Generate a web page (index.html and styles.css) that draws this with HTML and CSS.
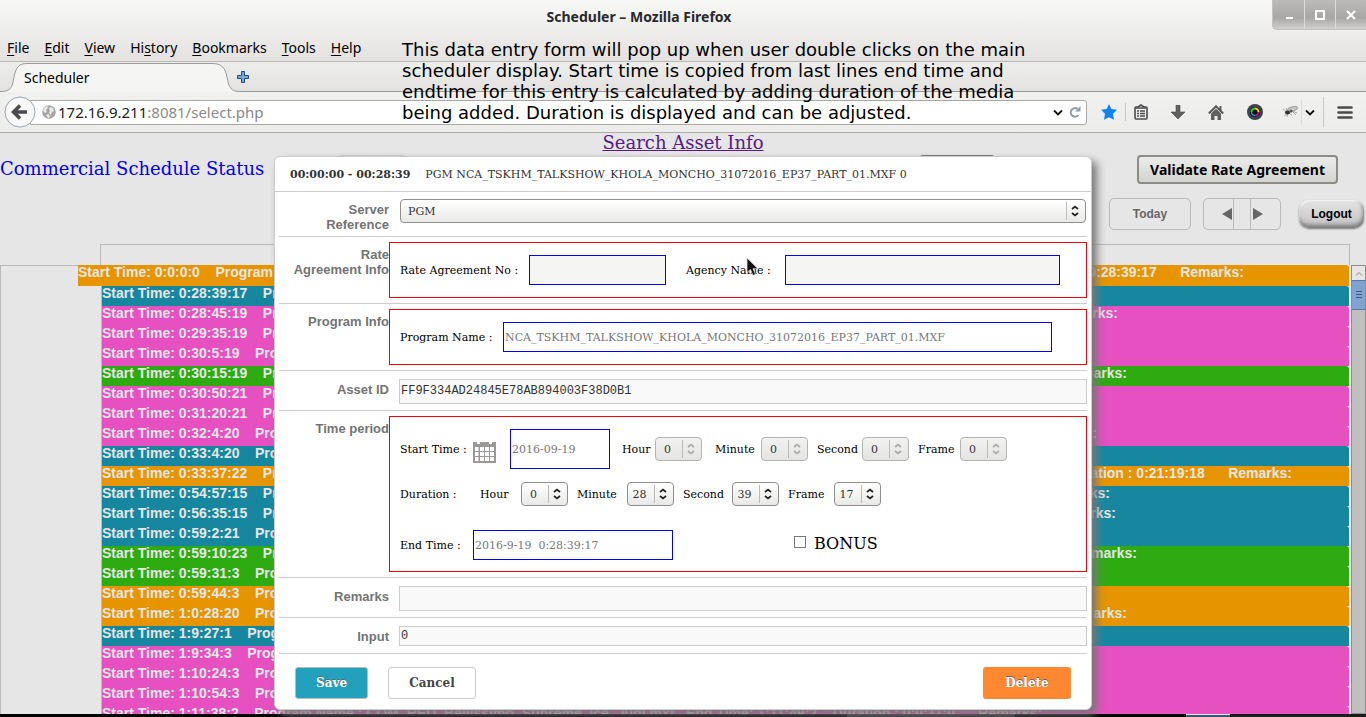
FILE: index.html
```html
<!DOCTYPE html>
<html lang="en">
<head>
<meta charset="utf-8">
<title>Scheduler</title>
<link rel="stylesheet" href="styles.css">
</head>
<body>
<header class="chrome">
  <div class="titlebar">
    <h1 class="window-title">Scheduler – Mozilla Firefox</h1>
    <div class="window-controls">
      <button type="button" aria-label="Minimize"><svg width="12" height="12" viewBox="0 0 12 12"><path d="M3 9h7" stroke="#fff" stroke-width="2"/></svg></button>
      <button type="button" aria-label="Maximize"><svg width="12" height="12" viewBox="0 0 12 12"><rect x="2" y="2" width="8" height="8" fill="none" stroke="#fff" stroke-width="2"/></svg></button>
      <button type="button" aria-label="Close"><svg width="12" height="12" viewBox="0 0 12 12"><path d="M2 2l8 8M10 2l-8 8" stroke="#fff" stroke-width="2"/></svg></button>
    </div>
  </div>
  <nav class="menubar">
    <span><u>F</u>ile</span><span><u>E</u>dit</span><span><u>V</u>iew</span><span>Hi<u>s</u>tory</span><span><u>B</u>ookmarks</span><span><u>T</u>ools</span><span><u>H</u>elp</span>
  </nav>
  <div class="tabbar">
    <div class="tab">
      <svg class="tab-shape" width="240" height="30" viewBox="0 0 240 30"><path d="M0 29.500C11 29.500 12 26 14 15C16 5 19 1.500 27 1.500H212C221 1.500 225 5 227 15C229 26 231 29.500 240 29.500V30H0Z" fill="#f5f5f4"/><path d="M0 29.500C11 29.500 12 26 14 15C16 5 19 1.500 27 1.500H212C221 1.500 225 5 227 15C229 26 231 29.500 240 29.500" fill="none" stroke="#9a9a99"/></svg>
      <span class="tab-title">Scheduler</span>
    </div>
    <button type="button" class="new-tab" aria-label="New tab"><svg width="12" height="12" viewBox="0 0 12 12"><path d="M4.500 .5h3v4h4v3h-4v4h-3v-4h-4v-3h4z" fill="#7ba7d8" stroke="#204a87"/></svg></button>
  </div>
  <div class="navbar">
    <button type="button" class="back" aria-label="Back"><svg width="32" height="32" viewBox="0 0 32 32"><circle cx="16" cy="16" r="15" fill="#f7f7f7" stroke="#9aa5b1"/><path d="M9 16h14M16 9.500L9.500 16l6.500 6.500" fill="none" stroke="#4a4a4a" stroke-width="3.500"/></svg></button>
    <div class="urlbar">
      <svg width="14" height="14" viewBox="0 0 14 14"><circle cx="7" cy="7" r="6.800" fill="#a5a5a5"/><path d="M2 3l3-2 1 2-2 2 1 2-2 1-2-2zM8 2l3 1 1 3-2 1-1 3-2-2 1-2-1-2zM4 10l3-1 1 3-2 1z" fill="#e9e9e9"/></svg>
      <span class="url"><b>172.16.9.211</b>:8081/select.php</span>
      <svg width="10" height="7" viewBox="0 0 10 7"><path d="M1 1.500l4 4 4-4" fill="none" stroke="#111" stroke-width="1.800"/></svg>
      <svg width="12" height="12" viewBox="0 0 12 12"><path d="M9.500 9A4.300 4.300 0 1 1 8.500 2.800" fill="none" stroke="#8e9ba6" stroke-width="2"/><path d="M11.500 0v5.500H6.200z" fill="#8e9ba6"/></svg>
    </div>
    <div class="tools">
      <svg width="16" height="16" viewBox="0 0 16 16"><path d="M8 0l2.400 5 5.600.8-4 4 1 6L8 13.200 3 15.800l1-6-4-4L5.600 5z" fill="#1083f0"/></svg>
      <i class="rule"></i>
      <svg width="14" height="16" viewBox="0 0 14 16"><path d="M1 4q0-1 1-1h2l3-2 3 2h2q1 0 1 1v10q0 1-1 1H2q-1 0-1-1z" fill="#f0f0f0" stroke="#4b4b4b" stroke-width="1.600"/><path d="M2 4h10M3 7h2M6 7h5M3 9.500h2M6 9.500h5M3 12h2M6 12h5" stroke="#4b4b4b" stroke-width="1.500"/></svg>
      <svg class="apart" width="14" height="14" viewBox="0 0 14 14"><path d="M5 0h4v7h5l-7 7-7-7h5z" fill="#606060" stroke="#4b4b4b" stroke-width=".6"/></svg>
      <svg class="apart" width="16" height="15" viewBox="0 0 16 15"><path d="M.8 8.500L8 1.300l7.200 7.200M12.500 1v5" fill="none" stroke="#555" stroke-width="1.900"/><path d="M3 8.500L8 3.700l5 4.800V15H9.500v-4h-3v4H3z" fill="#606060"/></svg>
      <svg class="apart" width="16" height="16" viewBox="0 0 16 16"><circle cx="8" cy="8" r="8" fill="#3d424c"/><circle cx="8" cy="8" r="5" fill="#08080c"/><path d="M4.500 8A3.500 3.500 0 0 1 8 4.500" stroke="#2fd22f" stroke-width="2" fill="none"/><path d="M8 4.500A3.500 3.500 0 0 1 11.500 8" stroke="#f0d020" stroke-width="2" fill="none"/><path d="M11.500 8A3.500 3.500 0 0 1 8 11.500" stroke="#c01090" stroke-width="2" fill="none"/><path d="M4.500 8A3.500 3.500 0 0 0 8 11.500" stroke="#0ea5c9" stroke-width="1.500" fill="none"/></svg>
      <span class="bug">
        <svg width="16" height="14" viewBox="0 0 16 14"><ellipse cx="10.500" cy="4" rx="5" ry="2" transform="rotate(-18 10.500 4)" fill="#ccc" stroke="#999"/><path d="M1 4l4 3 5 3M2 11l3-2 5-3 5 2M4 3l2 5-1 4M10 6l4 4" fill="none" stroke="#aaa"/><ellipse cx="5.500" cy="7.500" rx="2.500" ry="2" fill="#333"/><circle cx="9" cy="6" r="1.500" fill="#555"/></svg>
        <i class="rule light"></i>
        <svg width="10" height="7" viewBox="0 0 10 7"><path d="M1 1.500l4 4 4-4" fill="none" stroke="#111" stroke-width="1.800"/></svg>
      </span>
      <i class="rule tall"></i>
      <svg class="menu" width="16" height="13" viewBox="0 0 16 13"><path d="M1.500 1.500h13M1.500 6.500h13M1.500 11.500h13" stroke="#4b4b4b" stroke-width="2.600" stroke-linecap="round"/></svg>
    </div>
  </div>
</header>

<p class="annotation">This data entry form will pop up when user double clicks on the main<br>scheduler display. Start time is copied from last lines end time and<br>endtime for this entry is calculated by adding duration of the media<br>being added. Duration is displayed and can be adjusted.</p>

<main class="page">
  <div class="search"><a href="#search">Search Asset Info</a></div>
  <div class="status-line">
    <span class="status">Commercial Schedule Status</span>
    <div class="covered"><i></i><i></i></div>
    <button type="button" class="gtk">Validate Rate Agreement</button>
  </div>
  <div class="date-line">
    <button type="button" class="today">Today</button>
    <div class="pager">
      <button type="button" aria-label="Previous"><svg width="10" height="12" viewBox="0 0 10 12"><path d="M10 0v12L0 6z" fill="#666"/></svg></button>
      <i></i>
      <button type="button" aria-label="Next"><svg width="10" height="12" viewBox="0 0 10 12"><path d="M0 0v12l10-6z" fill="#666"/></svg></button>
    </div>
    <button type="button" class="logout">Logout</button>
  </div>
  <div class="scale"></div>
  <div class="board">
    <div class="gutter"></div>
    <div class="events">
      <div class="event orange first"><span>Start Time: 0:0:0:0 &nbsp;&nbsp; Program Name :</span><span class="tail">Duration : 0:28:39:17 &nbsp; &nbsp; &nbsp;Remarks:</span></div>
      <div class="event teal"><span>Start Time: 0:28:39:17 &nbsp;&nbsp; Program Name :</span></div>
      <div class="event pink"><span>Start Time: 0:28:45:19 &nbsp;&nbsp; Program Name :</span><span class="tail">Remarks:</span></div>
      <div class="event pink"><span>Start Time: 0:29:35:19 &nbsp;&nbsp; Program Name :</span></div>
      <div class="event pink"><span>Start Time: 0:30:5:19 &nbsp;&nbsp; Program Name :</span></div>
      <div class="event green"><span>Start Time: 0:30:15:19 &nbsp;&nbsp; Program Name :</span><span class="tail">Remarks:</span></div>
      <div class="event pink"><span>Start Time: 0:30:50:21 &nbsp;&nbsp; Program Name :</span></div>
      <div class="event pink"><span>Start Time: 0:31:20:21 &nbsp;&nbsp; Program Name :</span></div>
      <div class="event pink"><span>Start Time: 0:32:4:20 &nbsp;&nbsp; Program Name :</span><span class="tail">Remarks:</span></div>
      <div class="event teal"><span>Start Time: 0:33:4:20 &nbsp;&nbsp; Program Name :</span></div>
      <div class="event orange"><span>Start Time: 0:33:37:22 &nbsp;&nbsp; Program Name :</span><span class="tail">Duration : 0:21:19:18 &nbsp; &nbsp; &nbsp;Remarks:</span></div>
      <div class="event teal"><span>Start Time: 0:54:57:15 &nbsp;&nbsp; Program Name :</span><span class="tail">Remarks:</span></div>
      <div class="event teal"><span>Start Time: 0:56:35:15 &nbsp;&nbsp; Program Name :</span><span class="tail">Remarks:</span></div>
      <div class="event teal"><span>Start Time: 0:59:2:21 &nbsp;&nbsp; Program Name :</span></div>
      <div class="event green"><span>Start Time: 0:59:10:23 &nbsp;&nbsp; Program Name :</span><span class="tail">Remarks:</span></div>
      <div class="event green"><span>Start Time: 0:59:31:3 &nbsp;&nbsp; Program Name :</span></div>
      <div class="event orange"><span>Start Time: 0:59:44:3 &nbsp;&nbsp; Program Name :</span></div>
      <div class="event orange"><span>Start Time: 1:0:28:20 &nbsp;&nbsp; Program Name :</span><span class="tail">Remarks:</span></div>
      <div class="event teal"><span>Start Time: 1:9:27:1 &nbsp;&nbsp; Program Name :</span></div>
      <div class="event pink"><span>Start Time: 1:9:34:3 &nbsp;&nbsp; Program Name :</span></div>
      <div class="event pink"><span>Start Time: 1:10:24:3 &nbsp;&nbsp; Program Name :</span></div>
      <div class="event pink"><span>Start Time: 1:10:54:3 &nbsp;&nbsp; Program Name :</span></div>
      <div class="event pink"><span>Start Time: 1:11:38:2 &nbsp;&nbsp; Program Name : COM_RED_Bellissimo_Supreme_Ice_Judi.mxf &nbsp; End Time: 1:11:49:2 &nbsp;&nbsp; Duration : 0:0:11:0 &nbsp; &nbsp; &nbsp;Remarks:</span></div>
    </div>
    <div class="scrollbar">
      <div class="scroll-up"><svg width="8" height="5" viewBox="0 0 8 5"><path d="M1 4.500l3-3 3 3" fill="none" stroke="#888"/></svg></div>
      <div class="thumb"><svg width="6" height="8" viewBox="0 0 6 8"><path d="M0 .5h6M0 3.500h6M0 6.500h6" stroke="#3a5a88"/></svg></div>
    </div>
  </div>
</main>
<footer class="taskbar"><i class="a"></i><i class="b"></i><i class="c"></i></footer>

<div class="backdrop">
<form class="dialog">
  <div class="dialog-head"><b>00:00:00 - 00:28:39</b><span>PGM NCA_TSKHM_TALKSHOW_KHOLA_MONCHO_31072016_EP37_PART_01.MXF 0</span></div>
  <div class="row server">
    <label class="name" for="server">Server<br>Reference</label>
    <div class="cell"><span class="pick wide"><select id="server"><option>PGM</option></select><svg width="10" height="12" viewBox="0 0 10 12"><path d="M2 4L5 1.500l3 2.500M2 8L5 10.500l3-2.500" fill="none" stroke="currentColor" stroke-width="1.700"/></svg></span></div>
  </div>
  <div class="row">
    <span class="name">Rate<br>Agreement Info</span>
    <div class="box one">
      <label class="w-rate" for="rate">Rate Agreement No :</label><input class="blue in-rate" id="rate" type="text" disabled>
      <label class="w-agency" for="agency">Agency Name :</label><input class="blue in-agency" id="agency" type="text" disabled>
    </div>
  </div>
  <div class="row">
    <span class="name">Program Info</span>
    <div class="box one">
      <label class="w-prog" for="prog">Program Name :</label><input class="blue in-prog" id="prog" type="text" value="NCA_TSKHM_TALKSHOW_KHOLA_MONCHO_31072016_EP37_PART_01.MXF">
    </div>
  </div>
  <div class="row plain">
    <label class="name" for="asset">Asset ID</label>
    <div class="cell"><input class="grey" id="asset" type="text" value="FF9F334AD24845E78AB894003F38D0B1"></div>
  </div>
  <div class="row">
    <span class="name">Time period</span>
    <div class="box time">
      <div class="line start">
        <label class="w-start" for="date">Start Time :</label>
        <svg class="cal" width="23" height="21" viewBox="0 0 23 21"><path d="M0 0h4v2h3V0h9v2h3V0h4v21H0z" fill="#9b9998"/><path d="M2 5h3.500v4H2zM7 5h4v4H7zM12 5h4v4h-4zM17 5h4v4h-4zM2 10h3.500v4H2zM7 10h4v4H7zM12 10h4v4h-4zM17 10h4v4h-4zM2 15h3.500v4H2zM7 15h4v4H7zM12 15h4v4h-4zM17 15h4v4h-4z" fill="#fff"/></svg>
        <input class="blue in-date" id="date" type="text" value="2016-09-19">
        <label class="w-hour" for="sh">Hour</label><span class="pick off"><select id="sh" disabled><option>0</option></select><svg width="10" height="12" viewBox="0 0 10 12"><path d="M2 4L5 1.500l3 2.500M2 8L5 10.500l3-2.500" fill="none" stroke="currentColor" stroke-width="1.700"/></svg></span>
        <label class="w-min" for="sm">Minute</label><span class="pick off"><select id="sm" disabled><option>0</option></select><svg width="10" height="12" viewBox="0 0 10 12"><path d="M2 4L5 1.500l3 2.500M2 8L5 10.500l3-2.500" fill="none" stroke="currentColor" stroke-width="1.700"/></svg></span>
        <label class="w-sec" for="ss">Second</label><span class="pick off"><select id="ss" disabled><option>0</option></select><svg width="10" height="12" viewBox="0 0 10 12"><path d="M2 4L5 1.500l3 2.500M2 8L5 10.500l3-2.500" fill="none" stroke="currentColor" stroke-width="1.700"/></svg></span>
        <label class="w-frame" for="sf">Frame</label><span class="pick off"><select id="sf" disabled><option>0</option></select><svg width="10" height="12" viewBox="0 0 10 12"><path d="M2 4L5 1.500l3 2.500M2 8L5 10.500l3-2.500" fill="none" stroke="currentColor" stroke-width="1.700"/></svg></span>
      </div>
      <div class="line duration">
        <span class="w-dur">Duration :</span>
        <label class="w-hour" for="dh">Hour</label><span class="pick"><select id="dh"><option>0</option></select><svg width="10" height="12" viewBox="0 0 10 12"><path d="M2 4L5 1.500l3 2.500M2 8L5 10.500l3-2.500" fill="none" stroke="currentColor" stroke-width="1.700"/></svg></span>
        <label class="w-min" for="dm">Minute</label><span class="pick"><select id="dm"><option>28</option></select><svg width="10" height="12" viewBox="0 0 10 12"><path d="M2 4L5 1.500l3 2.500M2 8L5 10.500l3-2.500" fill="none" stroke="currentColor" stroke-width="1.700"/></svg></span>
        <label class="w-sec" for="ds">Second</label><span class="pick"><select id="ds"><option>39</option></select><svg width="10" height="12" viewBox="0 0 10 12"><path d="M2 4L5 1.500l3 2.500M2 8L5 10.500l3-2.500" fill="none" stroke="currentColor" stroke-width="1.700"/></svg></span>
        <label class="w-frame" for="df">Frame</label><span class="pick"><select id="df"><option>17</option></select><svg width="10" height="12" viewBox="0 0 10 12"><path d="M2 4L5 1.500l3 2.500M2 8L5 10.500l3-2.500" fill="none" stroke="currentColor" stroke-width="1.700"/></svg></span>
      </div>
      <div class="line end">
        <label class="w-start" for="endt">End Time :</label><input class="blue in-end" id="endt" type="text" value="2016-9-19  0:28:39:17">
        <input class="tick" type="checkbox" id="bonus"><label class="bonus" for="bonus">BONUS</label>
      </div>
    </div>
  </div>
  <div class="row plain">
    <label class="name" for="remarks">Remarks</label>
    <div class="cell"><input class="grey" id="remarks" type="text"></div>
  </div>
  <div class="row plain short">
    <label class="name" for="input">Input</label>
    <div class="cell"><input class="grey" id="input" type="text" value="0"></div>
  </div>
  <div class="actions">
    <button type="button" class="save">Save</button><button type="button" class="cancel">Cancel</button><button type="button" class="delete">Delete</button>
  </div>
</form>
</div>
<svg class="pointer" width="14" height="20" viewBox="0 0 14 20"><path d="M1 1v14.500l3.500-3 2.500 6 2.600-1.200L7 11.700h5z" fill="#111" stroke="#ddd" stroke-width=".8"/></svg>
</body>
</html>
```
FILE: styles.css
```css
* { box-sizing: border-box; }
body {
  margin: 0;
  height: 100vh;
  overflow: hidden;
  position: relative;
  display: flex;
  flex-direction: column;
  background: #e6e6e6;
  color: #000;
  font-family: "DejaVu Serif", serif;
  font-size: 11px;
}
button { font: inherit; padding: 0; margin: 0; border: 0; background: none; color: inherit; }
input, select { margin: 0; }
svg { display: block; flex: none; }

/* browser chrome */
.chrome { flex: none; font-family: "Noto Sans", "Open Sans", sans-serif; font-size: 14px; background: linear-gradient(#f8f8f7, #e3e2e1 61px, #ededec 62px, #e3e2e1 91px, #f1f1f0 92px, #ececeb); border-bottom: 1px solid #b0aca6; }
.titlebar { height: 35px; display: grid; grid-template-columns: 1fr auto 1fr; align-items: start; }
.window-title { grid-column: 2; margin: 0; padding: 0 88px 0 0; font-size: 14px; line-height: 34px; font-weight: 700; color: #2a2a2a; }
.window-controls { grid-column: 3; justify-self: end; display: flex; height: 30px; border: 1px solid #c2c1bf; border-top: 0; border-right: 0; border-radius: 0 0 0 5px; background: linear-gradient(#bcbbb9, #a8a7a5 60%, #d0cfcd); }
.window-controls button { width: 31px; display: flex; justify-content: center; align-items: center; border-left: 1px solid #dddcda; }
.window-controls button:first-child { border-left: 0; }
.menubar { height: 27px; padding: 0 7px; display: flex; gap: 15px; line-height: 26px; border-bottom: 1px solid #b8b8b7; }
.menubar u { text-underline-offset: 2px; }
.tabbar { height: 30px; display: flex; align-items: center; border-bottom: 1px solid #9a9a99; }
.tab { position: relative; width: 237px; height: 30px; }
.tab-shape { position: absolute; left: 0; top: 0; }
.tab-title { position: relative; padding-left: 24px; font-size: 14px; line-height: 32px; }
.navbar { height: 40px; display: flex; align-items: center; padding: 0 13px 0 4px; }
.back { position: relative; z-index: 1; }
.urlbar { flex: 1; margin-left: -6px; height: 25px; display: flex; align-items: center; gap: 6px; padding: 0 5px 0 11px; background: #fff; border: 1px solid #aaa8a5; border-radius: 0 3px 3px 0; }
.url { flex: 1; margin-left: -4px; font-size: 15px; line-height: 23px; color: #8a8a8a; }
.url b { font-weight: 400; color: #222; }
.tools { display: flex; align-items: center; gap: 8px; margin-left: 14px; }
.apart { margin-left: 15px; }
.rule { width: 1px; height: 18px; background: #c6c9cc; }
.rule.light { height: 24px; background: #dcdcdc; }
.rule.tall { height: 30px; }
.bug { display: flex; align-items: center; gap: 3px; margin-left: 11px; }
.menu { margin-left: 5px; }
.annotation { position: absolute; z-index: 5; left: 402px; top: 39px; margin: 0; font: 18px/21px "DejaVu Sans", sans-serif; white-space: nowrap; }

/* page behind the dialog */
.page { flex: 1; min-height: 0; display: flex; flex-direction: column; }
.search { height: 22px; text-align: center; font-size: 18px; line-height: 19px; }
.search a { color: #551a8b; }
.status-line { display: flex; align-items: center; justify-content: space-between; height: 29px; padding-right: 28px; }
.status { font-size: 18px; line-height: 27px; height: 29px; color: #0000ee; }
.covered { flex: 1; align-self: stretch; display: flex; justify-content: space-between; margin: 0 142px 0 74px; }
.covered i { width: 68px; border: 2px solid #ccc; border-radius: 4px; }
.covered i + i { width: 76px; border-color: #777; }
.gtk { height: 29px; padding: 0 11px; border: 2px solid #8c8b86; border-radius: 4px; background: linear-gradient(#ebebea, #d4d4d1); font: 700 14px "Noto Sans", sans-serif; }
.date-line { display: flex; justify-content: flex-end; align-items: center; margin-top: 14px; padding-right: 2px; font: 700 12px "Liberation Sans", sans-serif; }
.today { width: 82px; height: 32px; border: 1px solid #bababa; border-radius: 5px; color: #666; }
.pager { display: flex; width: 78px; height: 32px; margin: 0 18px 0 12px; border: 1px solid #bababa; border-radius: 5px; }
.pager button { flex: 1; display: flex; align-items: center; padding-left: 2px; }
.pager button:first-child { justify-content: flex-end; padding: 0 1px 0 0; }
.pager i { width: 18px; border: solid #bababa; border-width: 0 1px; }
.logout { width: 65px; height: 28px; border-radius: 10px; background: linear-gradient(#e4e4e4, #c2c2c2); box-shadow: inset -1px -3px 4px #777, inset 1px 1px 2px #fff, 0 1px 2px #777; }
.scale { flex: none; height: 21px; margin: 14px 16px 0 100px; border: 1px solid #bababa; border-bottom: 0; }
.board { flex: 1; min-height: 0; overflow: hidden; display: flex; }
.gutter { flex: none; width: 102px; border: 1px solid #bababa; border-bottom: 0; }
.events { flex: 1; min-width: 0; font: 700 14px/15px "Liberation Sans", sans-serif; color: #e6e6e6; }
.event { height: 20px; display: flex; white-space: nowrap; border-radius: 0 3px 0 0; }
.event.first { height: 21px; margin-left: -24px; }
.event.orange { background: #e69500; }
.event.teal { background: #1787a0; }
.event.pink { background: #e650c0; }
.event.green { background: #2fab12; }
.tail { margin-left: auto; padding-right: 231px; }
.event:nth-child(1) .tail { padding-right: 105px; }
.event:nth-child(6) .tail { padding-right: 222px; }
.event:nth-child(9) .tail { padding-right: 252px; }
.event:nth-child(11) .tail { padding-right: 57px; }
.event:nth-child(12) .tail { padding-right: 239px; }
.event:nth-child(13) .tail { padding-right: 233px; }
.event:nth-child(15) .tail { padding-right: 212px; }
.event:nth-child(18) .tail { padding-right: 222px; }
.scrollbar { flex: none; width: 15px; margin-left: 2px; border: 1px solid #8e8d8b; background: #c0bfbd; }
.scroll-up { height: 14px; display: flex; align-items: center; justify-content: center; background: #e6e6e5; }
.thumb { height: 30px; display: flex; align-items: center; justify-content: center; background: #81a3cf; border: 1px solid #5578a8; border-width: 1px 0; }
.taskbar { flex: none; height: 3px; background: #000; display: flex; }
.taskbar .a { width: 168px; margin-left: 62%; background: #2b2b2b; }
.taskbar .b { width: 44px; margin-left: auto; border-top: 1px solid #e6e6e6; background: #35557c; }
.taskbar .c { width: 136px; background: #1c1c1c; }

/* event dialog */
.backdrop { position: absolute; z-index: 2; left: 0; right: 0; top: 156px; display: flex; justify-content: center; }
.dialog { width: 818px; border: 1px solid #ccc; border-radius: 6px; background: #fff; box-shadow: 5px 5px 8px #777; }
.dialog-head { display: flex; gap: 15px; height: 35px; padding-left: 15px; line-height: 35px; border-bottom: 1px solid #ccc; color: #333; }
.row { display: grid; grid-template-columns: 110px 1fr; margin: 0 4px; padding: 5px 0; border-bottom: 1px solid #ccc; }
.name { padding-top: 5px; text-align: right; font: 700 13px/15px "Liberation Sans", sans-serif; color: #747474; }
.cell { padding-left: 10px; }
.server { padding: 5px 0 4px; }
.server .cell { padding: 2px 1px 0 11px; }
.box { border: 1px solid #f00; padding: 0 10px; }
.one { height: 56px; display: flex; align-items: center; }
.blue { border: 1px solid #00f; background: #fff; padding: 1px; height: 30px; color: #777; font: 11px "DejaVu Serif", serif; }
.blue:disabled { background: #f5f5f4; }
.w-rate { width: 129px; }
.in-rate { width: 137px; margin-right: 20px; }
.w-agency { width: 99px; }
.in-agency { flex: 0 1 275px; min-width: 0; }
.w-prog { width: 103px; }
.in-prog { flex: 0 1 549px; min-width: 0; }
.grey { display: block; width: 100%; height: 25px; padding: 0 1px 2px; border: 1px solid #ccc; background: #f9f9f9; color: #333; font: 12px "Liberation Mono", monospace; }
.plain { padding: 8px 0 6px; }
.plain .name { padding-top: 3px; }
.short .grey { height: 20px; padding-bottom: 0; }
.short { padding-bottom: 7px; }
.line { display: flex; align-items: center; }
.time { height: 156px; padding-top: 12px; }
.start { height: 40px; }
.duration { height: 50px; }
.end { height: 52px; }
.w-start { width: 73px; }
.cal { margin: 6px 14px 0 0; }
.in-date { width: 100px; height: 40px; margin-right: 12px; }
.w-hour { width: 33px; }
.w-min { width: 59px; padding-left: 13px; }
.w-sec { width: 54px; padding-left: 9px; }
.w-frame { width: 51px; padding-left: 9px; }
.w-dur { width: 80px; }
.duration .w-hour { width: 41px; }
.duration .w-min { padding-left: 9px; }
.duration .w-sec { width: 58px; }
.duration .w-frame { width: 55px; }
.in-end { width: 200px; margin-right: 121px; white-space: pre; }
.tick { appearance: none; width: 12px; height: 12px; margin-bottom: 6px; border: 1px solid #777; background: #fff; }
.bonus { margin: 0 0 4px 8px; font-size: 16px; }
.pick { position: relative; display: block; flex: none; width: 47px; color: #222; }
.pick select { display: block; appearance: none; width: 100%; height: 24px; padding: 0 22px 0 0; text-align: center; text-align-last: center; border: 1px solid #8f8e8c; border-radius: 4px; background: linear-gradient(#fff, #e9e9e7); color: #333; font: 11px "DejaVu Serif", serif; opacity: 1; }
.pick::after { content: ""; position: absolute; right: 19px; top: 3px; bottom: 3px; width: 1px; background: #bbb; }
.pick svg { position: absolute; right: 6px; top: 6px; pointer-events: none; }
.pick.wide { width: 100%; }
.pick.wide select { text-align: left; text-align-last: left; padding-left: 7px; }
.pick.off { color: #aaa; }
.pick.off select { background: linear-gradient(#f2f2f1, #e4e4e2); border-color: #b5b4b2; }
.actions { display: flex; gap: 20px; padding: 13px 20px 10px; font-size: 12px; font-weight: 700; }
.actions button { width: 88px; height: 32px; border-radius: 3px; }
.actions .save { width: 73px; background: #22a1bc; border: 1px solid #bbb; color: #fff; text-shadow: 0 -1px #666; }
.actions .cancel { border: 1px solid #ccc; color: #454545; }
.actions .delete { margin-left: auto; background: #ff8831; color: #fff; text-shadow: 0 -1px #666; }
.pointer { position: absolute; z-index: 6; left: 746px; top: 257px; }
```
